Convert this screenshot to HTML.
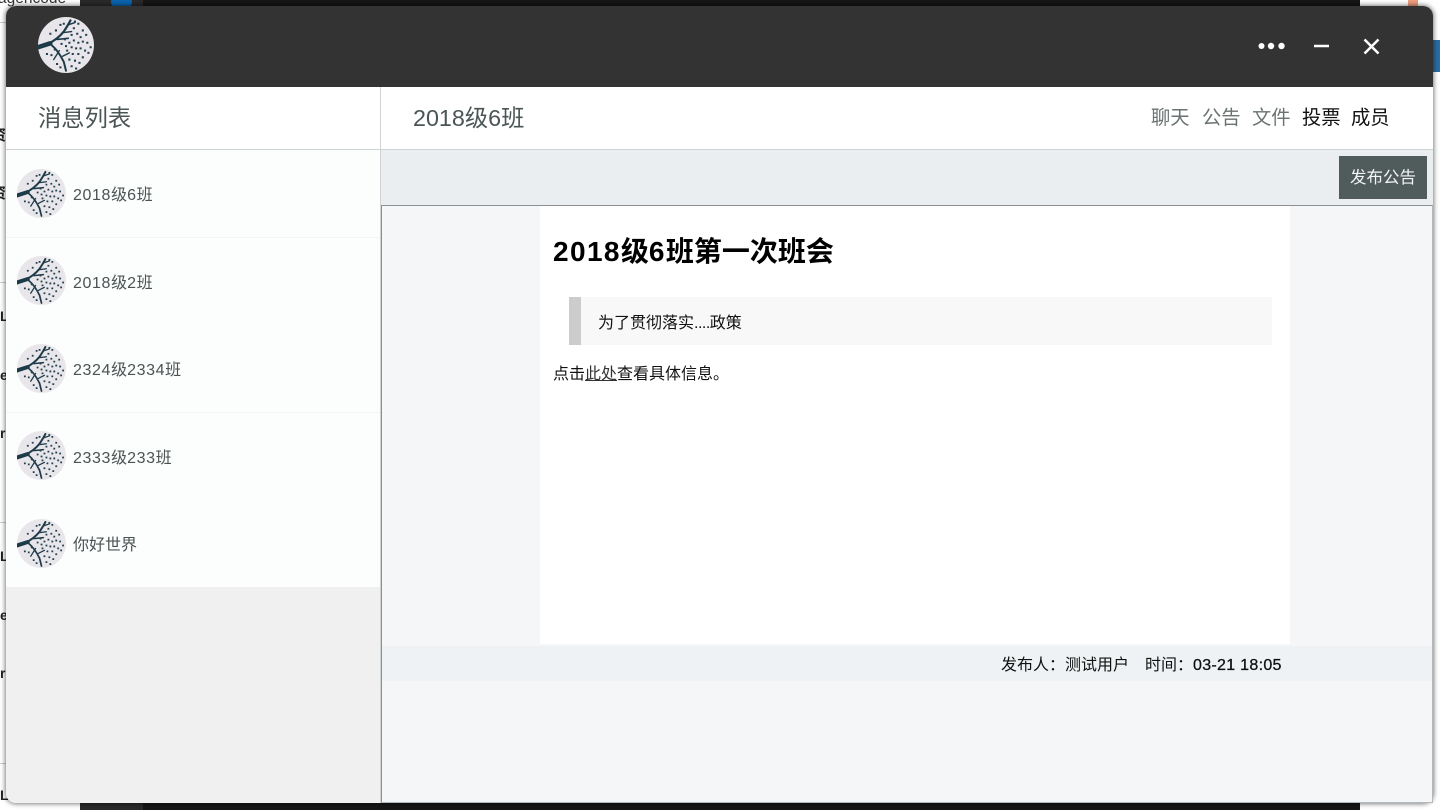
<!DOCTYPE html>
<html lang="zh">
<head>
<meta charset="utf-8">
<title>消息列表</title>
<style>
html,body{margin:0;padding:0;width:1440px;height:810px;overflow:hidden;background:#fff}
body{position:relative;font-family:"Liberation Sans","Noto Sans CJK SC",sans-serif;}
.a{position:absolute;white-space:nowrap}
.bg{position:absolute}
#win{position:absolute;left:6px;top:6px;width:1427px;height:797px;border-radius:10px;overflow:hidden;background:#f0f0f0;box-shadow:0 0 5px 1px rgba(0,0,0,.5)}
.nm{position:absolute;left:73px;font-size:16px;line-height:24px;color:#4b5353;white-space:nowrap}
.nm b{font-weight:normal;letter-spacing:.62px}
.tab{position:absolute;top:105.500px;font-size:19.300px;line-height:26px;white-space:nowrap}
.st{left:0;font-size:14px;line-height:18px;font-weight:bold;color:#222}
.hl{position:absolute;left:0;width:6px;height:1px;background:#ccc}
</style>
</head>
<body>
<svg width="0" height="0" style="position:absolute">
<defs>
<symbol id="av" viewBox="0 0 100 100">
<circle cx="50" cy="50" r="50" fill="#e8e6ea"/>
<g fill="none" stroke="#1d3a48" stroke-linecap="round">
<path d="M0 54 L22 47" stroke-width="8"/>
<path d="M18 48 C30 42 38 36 46 26 C50 20 54 14 58 6" stroke-width="4"/>
<path d="M24 50 C34 58 40 68 46 80 L50 96" stroke-width="3.500"/>
<path d="M34 40 L54 38" stroke-width="3"/>
<path d="M44 28 L60 26 M38 60 L28 76 M44 70 L56 64 M54 14 L66 10" stroke-width="2.500"/>
</g>
<path fill="none" stroke="#22404e" stroke-width="3.600" stroke-linecap="square" d="M64 20h.1M72 12h.1M80 24h.1M86 32h.1M60 32h.1M70 30h.1M76 36h.1M56 46h.1M64 42h.1M72 46h.1M80 44h.1M88 46h.1M94 54h.1M50 52h.1M42 48h.1M60 54h.1M68 56h.1M76 56h.1M84 60h.1M90 64h.1M52 60h.1M62 66h.1M72 66h.1M80 72h.1M56 76h.1M66 78h.1M74 82h.1M60 88h.1M68 92h.1M32 24h.1M40 14h.1M46 12h.1M22 30h.1M16 66h.1M24 68h.1M34 84h.1M40 90h.1M30 58h.1M48 40h.1M66 8h.1"/>
</symbol>
</defs>
</svg>

<!-- backdrop behind the window -->
<div class="bg" style="left:80px;top:0;width:1280px;height:6px;background:#161616"></div>
<div class="bg" style="left:80px;top:0;width:63px;height:6px;background:#2a2a2a"></div>
<div class="bg" style="left:111px;top:-6px;width:21px;height:16px;border-radius:50%;background:#0a64ad"></div>
<div class="bg" style="left:80px;top:803px;width:1280px;height:7px;background:#161616"></div>
<div class="bg" style="left:80px;top:803px;width:63px;height:7px;background:#2a2a2a"></div>
<div class="bg" style="left:1433px;top:40px;width:7px;height:32px;background:#2a6ea3"></div>
<div class="bg" style="left:1408px;top:0;width:10px;height:6px;background:#f0a080"></div>
<div class="a" style="left:-2px;top:-11px;font-size:15.500px;line-height:20px;color:#333">agencode -</div>
<div class="hl" style="top:22px"></div>
<div class="hl" style="top:282px"></div>
<div class="hl" style="top:522px"></div>
<div class="hl" style="top:763px"></div>
<div class="a st" style="left:-9px;top:127px;font-size:15px">资</div>
<div class="a st" style="left:-9px;top:185px;font-size:15px">资</div>
<div class="a st" style="top:307px">L</div>
<div class="a st" style="top:366px">e</div>
<div class="a st" style="top:424px">r</div>
<div class="a st" style="top:547px">L</div>
<div class="a st" style="top:606px">e</div>
<div class="a st" style="top:664px">r</div>
<div class="a st" style="top:786px">L</div>

<div id="win"></div>
<div class="bg" style="left:6px;top:6px;width:1427px;height:81px;background:#333;border-radius:10px 10px 0 0"></div>
<svg class="a" style="left:38px;top:17px" width="56" height="56"><use href="#av" width="56" height="56"/></svg>

<!-- window controls -->
<svg class="a" style="left:1255px;top:30px" width="130" height="32" fill="none" stroke="#fff">
<g fill="#fff" stroke="none"><circle cx="6.500" cy="16" r="3"/><circle cx="16" cy="16" r="3.200"/><circle cx="26.500" cy="16" r="3.200"/></g>
<path d="M59 16H74" stroke-width="2.500"/>
<path d="M109.500 9.500L123.500 23.500M123.500 9.500L109.500 23.500" stroke-width="2.500"/>
</svg>

<!-- left header -->
<div class="bg" style="left:6px;top:87px;width:374px;height:62px;background:#fff"></div>
<div class="a" style="left:38px;top:102px;font-size:23.300px;line-height:33px;color:#4b5555">消息列表</div>
<div class="bg" style="left:6px;top:149px;width:375px;height:1px;background:#cfd3d3"></div>

<!-- list -->
<div class="bg" style="left:6px;top:150px;width:374px;height:437px;background:#fcfdfd"></div>
<div class="bg" style="left:6px;top:237px;width:374px;height:1px;background:#f3f5f5"></div>
<div class="bg" style="left:6px;top:412px;width:374px;height:1px;background:#f3f5f5"></div>
<div class="bg" style="left:6px;top:587px;width:374px;height:216px;background:#f0f0f0;border-radius:0 0 0 10px"></div>

<svg class="a" style="left:17px;top:169px" width="49" height="49"><use href="#av" width="49" height="49"/></svg>
<svg class="a" style="left:17px;top:256px" width="49" height="49"><use href="#av" width="49" height="49"/></svg>
<svg class="a" style="left:17px;top:344px" width="49" height="49"><use href="#av" width="49" height="49"/></svg>
<svg class="a" style="left:17px;top:431px" width="49" height="49"><use href="#av" width="49" height="49"/></svg>
<svg class="a" style="left:17px;top:519px" width="49" height="49"><use href="#av" width="49" height="49"/></svg>
<div class="nm" style="top:184px"><b>2018</b>级<b>6</b>班</div>
<div class="nm" style="top:272px"><b>2018</b>级<b>2</b>班</div>
<div class="nm" style="top:359px"><b>2324</b>级<b>2334</b>班</div>
<div class="nm" style="top:447px"><b>2333</b>级<b>233</b>班</div>
<div class="nm" style="top:534px">你好世界</div>

<!-- main -->
<div class="bg" style="left:380px;top:87px;width:1px;height:716px;background:#cfd3d3"></div>
<div class="bg" style="left:381px;top:87px;width:1052px;height:62px;background:#fff"></div>
<div class="bg" style="left:381px;top:149px;width:1052px;height:1px;background:#cfd3d3"></div>
<div class="a" style="left:413px;top:102px;font-size:23.300px;line-height:33px;color:#4b5555">2018级6班</div>
<div class="tab" style="left:1151px;color:#6a7272">聊天</div>
<div class="tab" style="left:1202px;color:#6a7272">公告</div>
<div class="tab" style="left:1252px;color:#6a7272">文件</div>
<div class="tab" style="left:1302px;color:#111">投票</div>
<div class="tab" style="left:1351px;color:#111">成员</div>

<div class="bg" style="left:381px;top:150px;width:1052px;height:55px;background:#ebeef0"></div>
<div class="a" style="left:1339px;top:156px;width:88px;height:43px;background:#505b5b;color:#f4f6f6;font-size:16.500px;line-height:45px;text-align:center">发布公告</div>

<!-- notice frame -->
<div class="bg" style="left:381px;top:205px;width:1052px;height:598px;box-sizing:border-box;border:1px solid #8c9092;border-right-color:#b5b8ba;border-bottom-color:#b5b8ba;background:#f4f6f8"></div>
<div class="bg" style="left:540px;top:206px;width:750px;height:438px;background:#fff"></div>
<div class="a" style="left:553px;top:233px;font-size:28px;line-height:38px;font-weight:bold;color:#000"><span style="letter-spacing:1.400px">2018</span>级<span style="letter-spacing:1.400px">6</span>班第一次班会</div>
<div class="bg" style="left:569px;top:297px;width:703px;height:48px;background:#f8f8f8"></div>
<div class="bg" style="left:569px;top:297px;width:12px;height:48px;background:#ccc"></div>
<div class="a" style="left:598px;top:313px;font-size:16px;line-height:22px;color:#111">为了贯彻落实<span style="letter-spacing:-.5px">....</span>政策</div>
<div class="a" style="left:553px;top:364px;font-size:16px;line-height:22px;color:#111">点击<span style="text-decoration:underline;color:#333">此处</span>查看具体信息。</div>

<div class="bg" style="left:382px;top:646px;width:1050px;height:35px;background:#eff2f4"></div>
<div class="a" style="left:1001px;top:655px;font-size:16px;line-height:22px;color:#111">发布人：测试用户</div>
<div class="a" style="left:1145px;top:655px;font-size:16px;line-height:22px;color:#111">时间：<span style="letter-spacing:.3px;-webkit-text-stroke:.3px #111">03-21 18:05</span></div>
</body>
</html>
